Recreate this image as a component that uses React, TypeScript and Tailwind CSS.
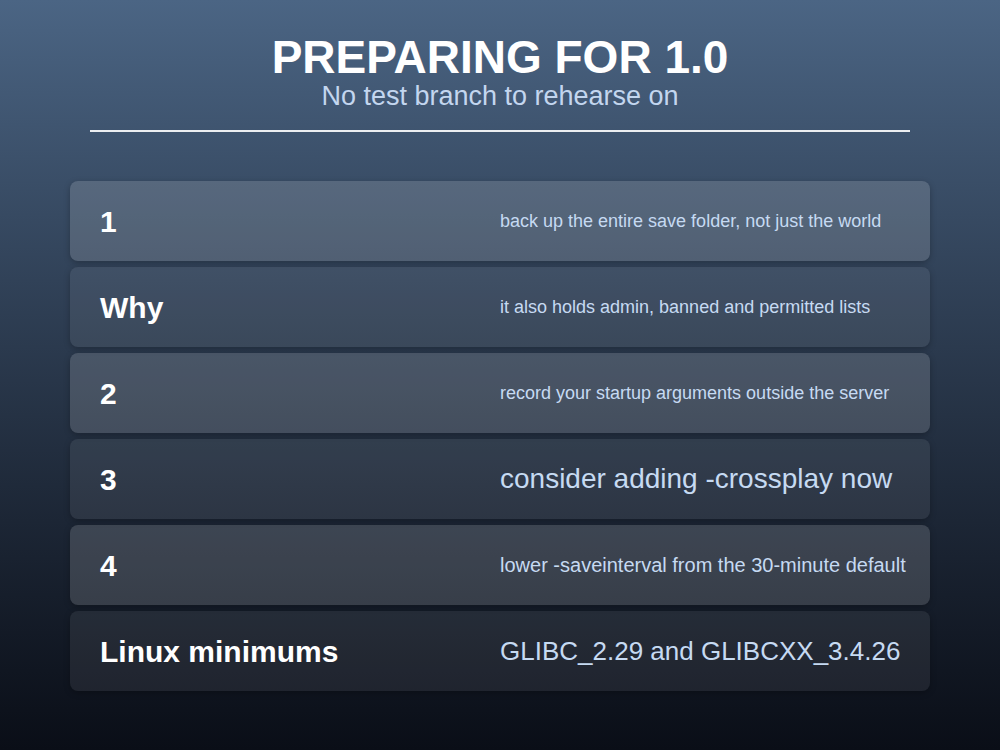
const rows = [
    { label: '1', text: 'back up the entire save folder, not just the world', size: 'text-[18px]', tone: 'bg-white/15' },
    { label: 'Why', text: 'it also holds admin, banned and permitted lists', size: 'text-[18px]', tone: 'bg-white/[0.07]' },
    { label: '2', text: 'record your startup arguments outside the server', size: 'text-[18px]', tone: 'bg-white/15' },
    { label: '3', text: 'consider adding -crossplay now', size: 'text-[28px]', tone: 'bg-white/[0.07]' },
    { label: '4', text: 'lower -saveinterval from the 30-minute default', size: 'text-[20px]', tone: 'bg-white/15' },
    { label: 'Linux minimums', text: 'GLIBC_2.29 and GLIBCXX_3.4.26', size: 'text-[26px]', tone: 'bg-white/[0.07]' },
]

export default function App() {
    return (
        <div
            className="flex h-[750px] w-[1000px] flex-col bg-gradient-to-b from-[#4b6584] to-[#0a0e17] font-['Liberation_Sans',Arial,sans-serif]"
        >
            <header className="flex flex-col items-center pt-[34px]">
                <h1 className="text-[46px] leading-[46px] font-bold text-white">PREPARING FOR 1.0</h1>
                <p className="text-[27px] leading-[32px] text-[#c3d6ef]">No test branch to rehearse on</p>
                <div className="mt-[18px] h-[2px] w-[820px] bg-white/90" />
            </header>

            <div className="mt-[49px] flex flex-col gap-[6px] px-[70px]">
                {rows.map((row) => (
                    <div
                        key={row.label}
                        className={`grid h-[80px] grid-cols-[400px_1fr] items-center rounded-lg px-[30px] shadow-[0_2px_6px_rgba(0,0,0,0.25)] ${row.tone}`}
                    >
                        <span className="text-[30px] font-bold text-white">{row.label}</span>
                        <span className={`whitespace-nowrap text-[#c6daf2] ${row.size}`}>{row.text}</span>
                    </div>
                ))}
            </div>
        </div>
    )
}
